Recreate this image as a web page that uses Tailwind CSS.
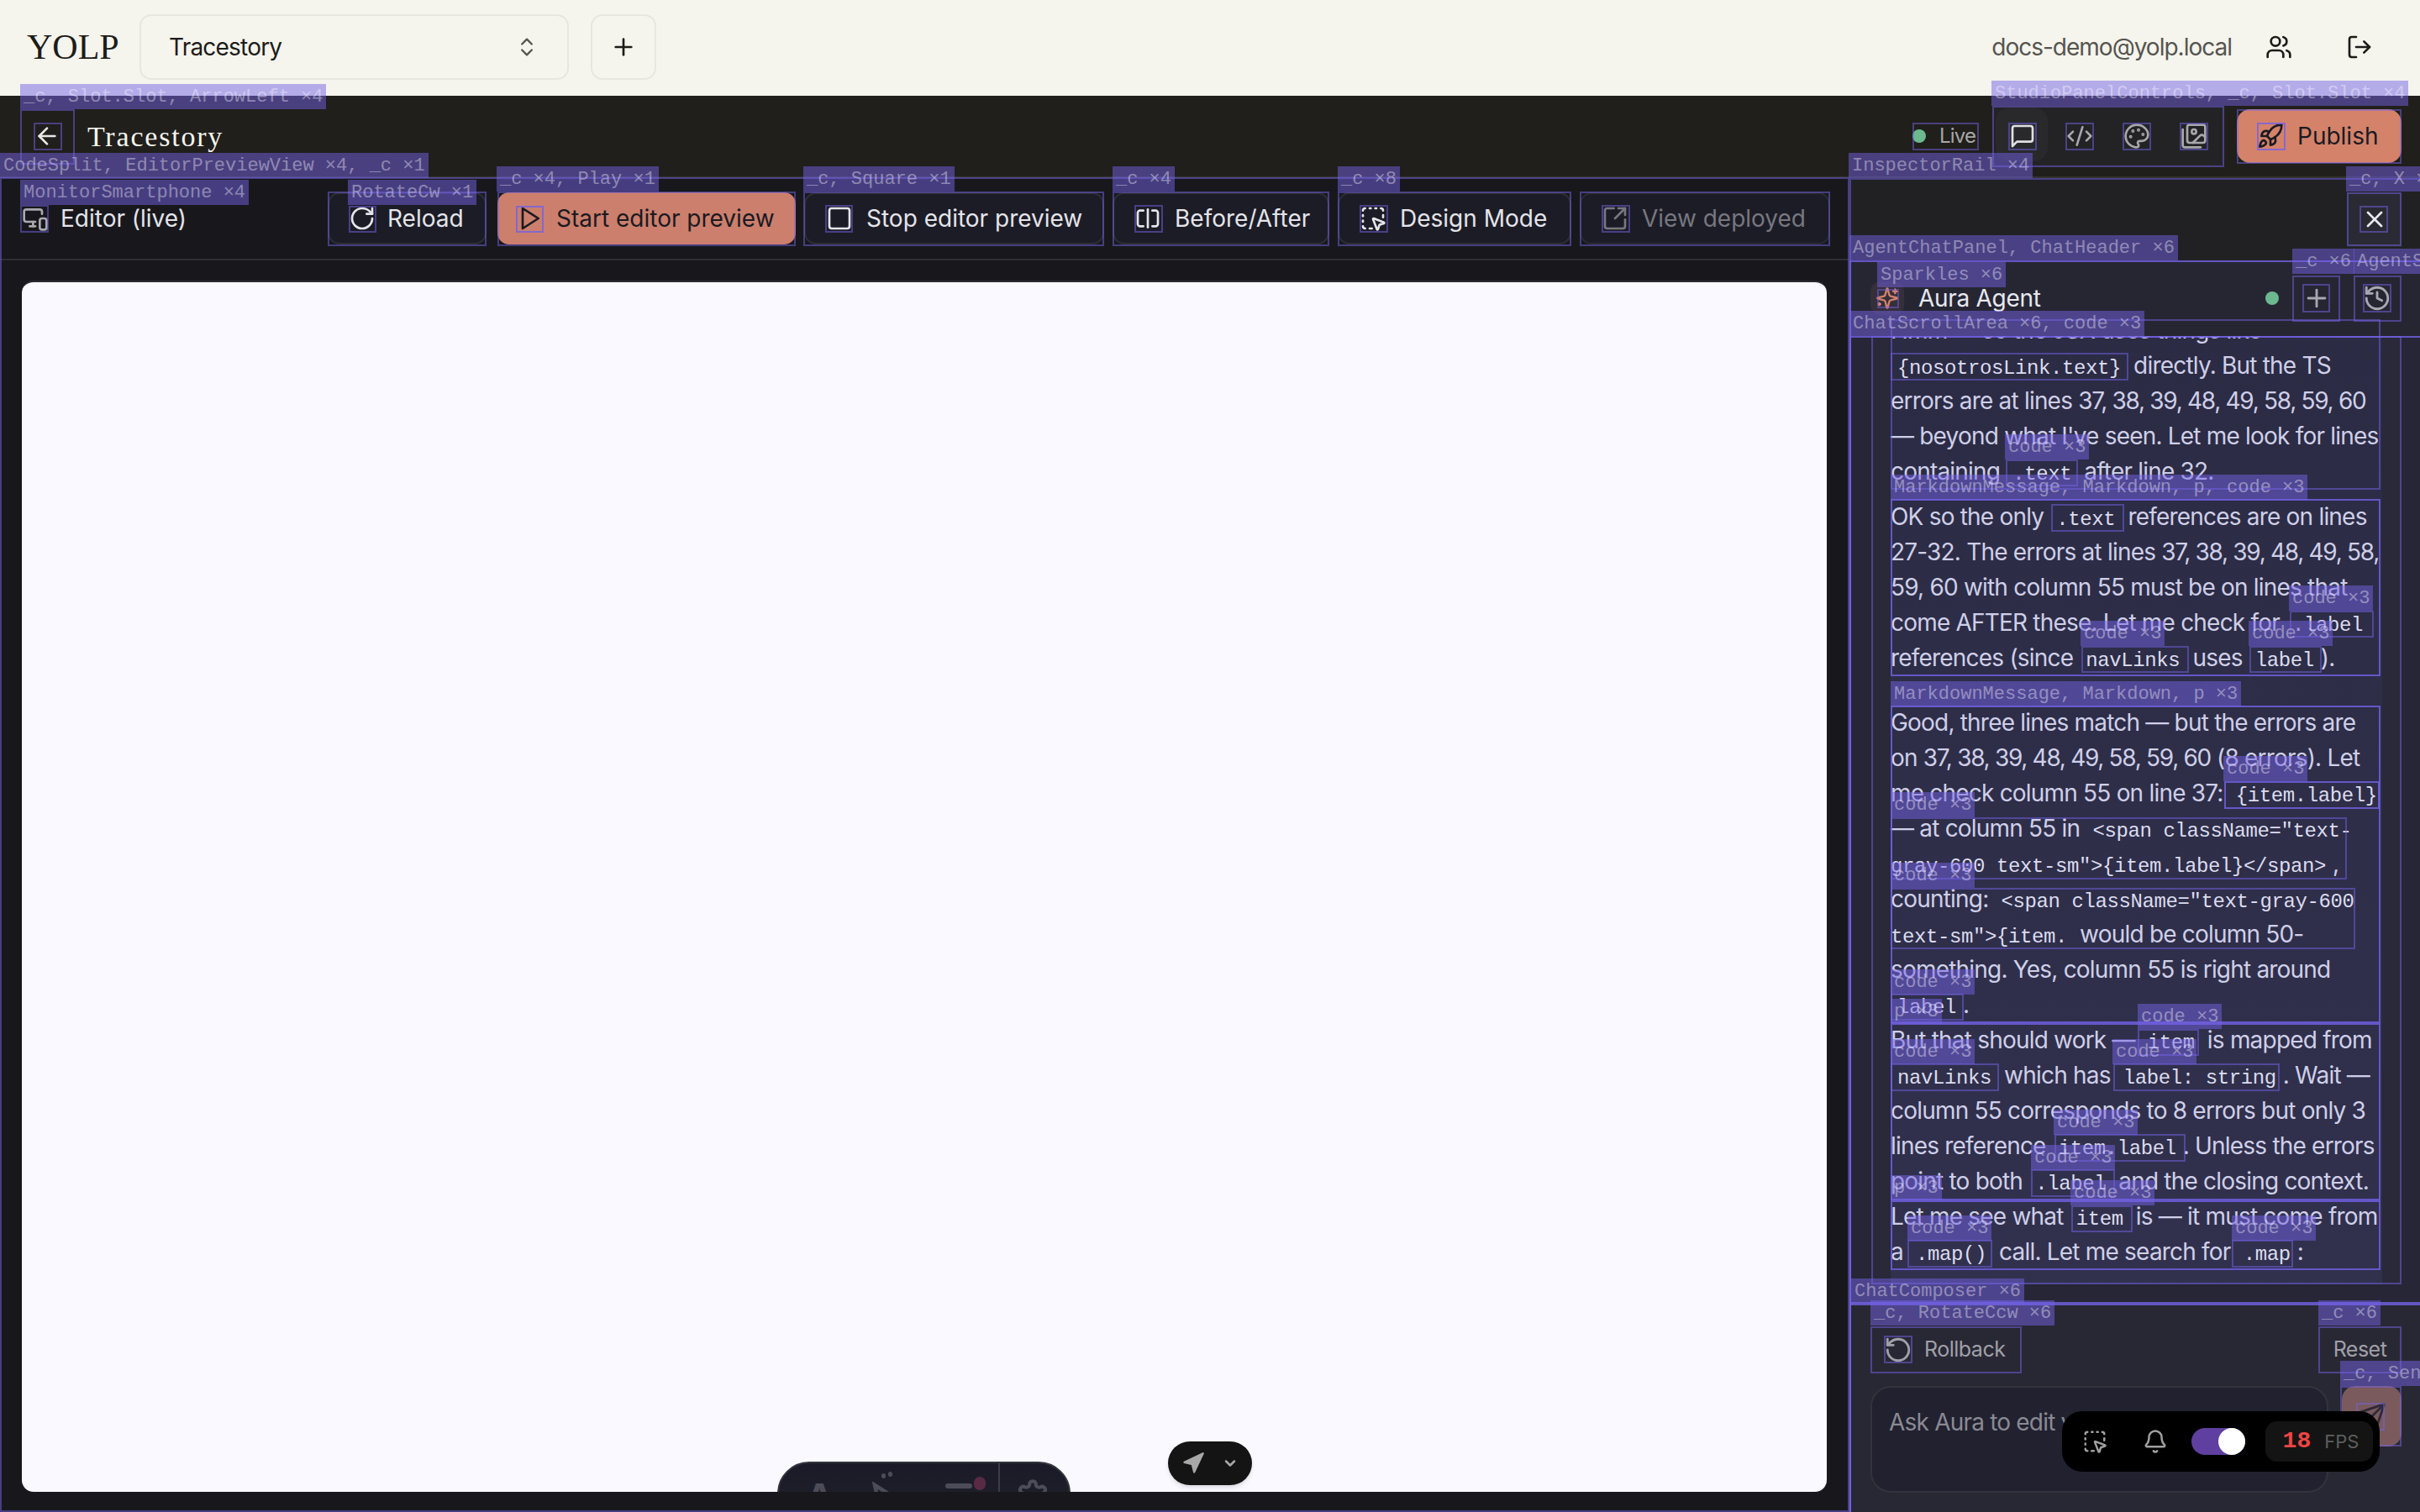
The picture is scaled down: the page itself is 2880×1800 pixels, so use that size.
<!DOCTYPE html>
<html lang="en">
<head>
<meta charset="UTF-8" />
<title>YOLP - Tracestory</title>
<script src="https://cdn.jsdelivr.net/npm/@tailwindcss/browser@4"></script>
</head>
<body>
<div id="root" class="relative w-[2880px] h-[1800px] overflow-hidden flex flex-col bg-[#18181c] font-['Inter',sans-serif] text-[28px] tracking-[-0.8px]">

  <!-- app bar -->
  <header class="h-[114px] shrink-0 flex items-center pl-[32px] pr-[56px] pb-[2px] bg-[#f5f4ed] text-[#1d1c18]">
    <span class="font-['Liberation_Serif',serif] text-[42px] tracking-[0px] w-[134px]">YOLP</span>
    <button class="w-[511px] h-[78px] flex items-center justify-between pl-[33px] pr-[34px] border-2 border-[#e8e7df] rounded-[14px]">
      <span>Tracestory</span>
      <svg class="w-[28px] h-[28px] text-[#55554f]" viewBox="0 0 24 24" fill="none" stroke="currentColor" stroke-width="2" stroke-linecap="round" stroke-linejoin="round"><path d="m7 15 5 5 5-5"/><path d="m7 9 5-5 5 5"/></svg>
    </button>
    <button class="ml-[26px] w-[78px] h-[78px] flex items-center justify-center border-2 border-[#e8e7df] rounded-[14px]">
      <svg class="w-[32px] h-[32px]" viewBox="0 0 24 24" fill="none" stroke="currentColor" stroke-width="2" stroke-linecap="round" stroke-linejoin="round"><path d="M5 12h14"/><path d="M12 5v14"/></svg>
    </button>
    <span class="ml-auto text-[#55554f] tracking-[-1px]">docs-demo@yolp.local</span>
    <svg class="ml-[40px] w-[32px] h-[32px]" viewBox="0 0 24 24" fill="none" stroke="currentColor" stroke-width="2" stroke-linecap="round" stroke-linejoin="round"><path d="M16 21v-2a4 4 0 0 0-4-4H6a4 4 0 0 0-4 4v2"/><circle cx="9" cy="7" r="4"/><path d="M22 21v-2a4 4 0 0 0-3-3.87"/><path d="M16 3.13a4 4 0 0 1 0 7.75"/></svg>
    <svg class="ml-[64px] w-[32px] h-[32px]" viewBox="0 0 24 24" fill="none" stroke="currentColor" stroke-width="2" stroke-linecap="round" stroke-linejoin="round"><path d="M9 21H5a2 2 0 0 1-2-2V5a2 2 0 0 1 2-2h4"/><polyline points="16 17 21 12 16 7"/><line x1="21" y1="12" x2="9" y2="12"/></svg>
  </header>

  <!-- studio header -->
  <div class="h-[98px] shrink-0 flex items-center pl-[24px] pr-[22px] bg-[#201f1b] border-b-2 border-[#33322e]">
    <button class="w-[64px] h-[64px] flex items-center justify-center text-[#e8e8e8]">
      <svg class="w-[32px] h-[32px]" viewBox="0 0 24 24" fill="none" stroke="currentColor" stroke-width="2" stroke-linecap="round" stroke-linejoin="round"><path d="m12 19-7-7 7-7"/><path d="M19 12H5"/></svg>
    </button>
    <span class="ml-[16px] font-['Liberation_Serif',serif] text-[34px] tracking-[1.8px] text-[#f5f4ed]">Tracestory</span>
    <div class="ml-auto flex items-center gap-[16px] text-[24px] text-[#a8a8a8]">
      <span class="w-[16px] h-[16px] rounded-full bg-[#6cb88f]"></span>
      <span class="w-[47px]">Live</span>
    </div>
    <div class="ml-[16px] w-[276px] h-[73px] flex items-center gap-[34px] pl-[19px] bg-[#232326] text-[#a8a8a8] relative">
      <span class="absolute left-[4px] top-[2px] w-[62px] h-[64px] rounded-[16px] bg-[#29292c]"></span>
      <svg class="relative w-[34px] h-[32px] text-[#e0e0e0]" viewBox="0 0 24 24" fill="none" stroke="currentColor" stroke-width="2" stroke-linecap="round" stroke-linejoin="round"><path d="M21 15a2 2 0 0 1-2 2H7l-4 4V5a2 2 0 0 1 2-2h14a2 2 0 0 1 2 2z"/></svg>
      <svg class="w-[34px] h-[32px]" viewBox="0 0 24 24" fill="none" stroke="currentColor" stroke-width="2" stroke-linecap="round" stroke-linejoin="round"><path d="m18 16 4-4-4-4"/><path d="m6 8-4 4 4 4"/><path d="m14.5 4-5 16"/></svg>
      <svg class="w-[34px] h-[32px]" viewBox="0 0 24 24" fill="none" stroke="currentColor" stroke-width="2" stroke-linecap="round" stroke-linejoin="round"><circle cx="13.5" cy="6.5" r=".5" fill="currentColor"/><circle cx="17.5" cy="10.5" r=".5" fill="currentColor"/><circle cx="8.5" cy="7.5" r=".5" fill="currentColor"/><circle cx="6.5" cy="12.5" r=".5" fill="currentColor"/><path d="M12 2C6.5 2 2 6.5 2 12s4.5 10 10 10c.926 0 1.648-.746 1.648-1.688 0-.437-.18-.835-.437-1.125-.29-.289-.438-.652-.438-1.125a1.64 1.64 0 0 1 1.668-1.668h1.996c3.051 0 5.555-2.503 5.555-5.554C21.965 6.012 17.461 2 12 2z"/></svg>
      <svg class="w-[34px] h-[32px]" viewBox="0 0 24 24" fill="none" stroke="currentColor" stroke-width="2" stroke-linecap="round" stroke-linejoin="round"><path d="M18 22H4a2 2 0 0 1-2-2V6"/><path d="m22 13-1.296-1.296a2.41 2.41 0 0 0-3.408 0L11 18"/><circle cx="12" cy="8" r="2"/><rect width="16" height="16" x="6" y="2" rx="2"/></svg>
    </div>
    <button class="ml-[15px] w-[196px] h-[64px] flex items-center gap-[16px] pl-[24px] rounded-[16px] bg-[#d4826a] text-[#1a1a22] tracking-normal">
      <svg class="w-[32px] h-[32px]" viewBox="0 0 24 24" fill="none" stroke="currentColor" stroke-width="2" stroke-linecap="round" stroke-linejoin="round"><path d="M4.5 16.5c-1.5 1.26-2 5-2 5s3.74-.5 5-2c.71-.84.7-2.13-.09-2.91a2.18 2.18 0 0 0-2.91-.09z"/><path d="m12 15-3-3a22 22 0 0 1 2-3.95A12.88 12.88 0 0 1 22 2c0 2.72-.78 7.5-6 11a22.35 22.35 0 0 1-4 2z"/><path d="M9 12H4s.55-3.03 2-4c1.62-1.08 5 0 5 0"/><path d="M12 15v5s3.03-.55 4-2c1.08-1.62 0-5 0-5"/></svg>
      Publish
    </button>
  </div>

  <div class="flex-1 min-h-0 flex">
    <!-- editor preview -->
    <main class="w-[2200px] shrink-0 flex flex-col bg-[#18181c]">
      <div class="h-[98px] shrink-0 flex items-center pl-[26px] pr-[22px] border-b-2 border-[#2e2e32] text-[#e4e4ea] tracking-normal">
        <svg class="w-[32px] h-[32px] text-[#a8a8ae]" viewBox="0 0 24 24" fill="none" stroke="currentColor" stroke-width="2" stroke-linecap="round" stroke-linejoin="round"><path d="M18 8V6a2 2 0 0 0-2-2H4a2 2 0 0 0-2 2v7a2 2 0 0 0 2 2h8"/><path d="M10 19v-3.96 3.15"/><path d="M7 19h5"/><rect width="6" height="10" x="16" y="12" rx="2"/></svg>
        <span class="ml-[14px]">Editor (live)</span>
        <div class="ml-auto flex items-center gap-[10px]">
          <button class="w-[189px] h-[62px] flex items-center gap-[14px] pl-[23px] rounded-[14px] border-2 border-[#2e2e36] bg-[#1c1c26]">
            <svg class="w-[32px] h-[32px]" viewBox="0 0 24 24" fill="none" stroke="currentColor" stroke-width="2" stroke-linecap="round" stroke-linejoin="round"><path d="M21 12a9 9 0 1 1-9-9c2.52 0 4.93 1 6.74 2.74L21 8"/><path d="M21 3v5h-5"/></svg>
            Reload
          </button>
          <button class="ml-[3px] w-[355px] h-[62px] flex items-center gap-[16px] pl-[22px] rounded-[14px] bg-[#cc7f6c] text-[#1a1a22]">
            <svg class="w-[32px] h-[32px]" viewBox="0 0 24 24" fill="none" stroke="currentColor" stroke-width="2" stroke-linecap="round" stroke-linejoin="round"><polygon points="6 3 20 12 6 21 6 3"/></svg>
            Start editor preview
          </button>
          <button class="w-[357px] h-[62px] flex items-center gap-[16px] pl-[24px] rounded-[14px] border-2 border-[#2e2e36] bg-[#1c1c26]">
            <svg class="w-[32px] h-[32px]" viewBox="0 0 24 24" fill="none" stroke="currentColor" stroke-width="2" stroke-linecap="round" stroke-linejoin="round"><rect width="18" height="18" x="3" y="3" rx="2"/></svg>
            Stop editor preview
          </button>
          <button class="w-[258px] h-[62px] flex items-center gap-[16px] pl-[24px] rounded-[14px] border-2 border-[#2e2e36] bg-[#1c1c26]">
            <svg class="w-[32px] h-[32px]" viewBox="0 0 24 24" fill="none" stroke="currentColor" stroke-width="2" stroke-linecap="round" stroke-linejoin="round"><path d="M8 19H5c-1 0-2-1-2-2V7c0-1 1-2 2-2h3"/><path d="M16 5h3c1 0 2 1 2 2v10c0 1-1 2-2 2h-3"/><path d="M12 4v16"/></svg>
            Before/After
          </button>
          <button class="w-[278px] h-[62px] flex items-center gap-[16px] pl-[24px] rounded-[14px] border-2 border-[#2e2e36] bg-[#1c1c26]">
            <svg class="w-[32px] h-[32px]" viewBox="0 0 24 24" fill="none" stroke="currentColor" stroke-width="2" stroke-linecap="round" stroke-linejoin="round"><path d="M12.034 12.681a.498.498 0 0 1 .647-.647l9 3.5a.5.5 0 0 1-.033.943l-3.444 1.068a1 1 0 0 0-.66.66l-1.067 3.443a.5.5 0 0 1-.943.033z"/><path d="M5 3a2 2 0 0 0-2 2"/><path d="M19 3a2 2 0 0 1 2 2"/><path d="M5 21a2 2 0 0 1-2-2"/><path d="M9 3h1"/><path d="M9 21h2"/><path d="M14 3h1"/><path d="M3 9v1"/><path d="M21 9v2"/><path d="M3 14v1"/></svg>
            Design Mode
          </button>
          <button class="w-[298px] h-[62px] flex items-center gap-[16px] pl-[24px] rounded-[14px] border-2 border-[#2a2a32] bg-[#1c1c26] text-[#77777f]">
            <svg class="w-[32px] h-[32px]" viewBox="0 0 24 24" fill="none" stroke="currentColor" stroke-width="2" stroke-linecap="round" stroke-linejoin="round"><path d="M21 13v6a2 2 0 0 1-2 2H5a2 2 0 0 1-2-2V5a2 2 0 0 1 2-2h6"/><path d="m21 3-9 9"/><path d="M15 3h6v6"/></svg>
            View deployed
          </button>
        </div>
      </div>
      <div class="flex-1 min-h-0 pt-[24px] pb-[24px] pl-[26px] pr-[26px]">
        <div class="relative h-full rounded-[14px] bg-[#f9f9ff] border-t-2 border-[#2a2a30] overflow-hidden">
          <!-- clipped tool dock -->
          <div class="absolute left-[899px] top-[1404px] w-[349px] h-[110px] rounded-[38px] bg-gradient-to-b from-[#1a1a28] to-[#262630] border-2 border-[#34343e] text-[#4c4c58]">
            <span class="absolute left-[32px] top-[18px] font-bold text-[44px] leading-none">A</span>
            <svg class="absolute left-[108px] top-[20px] w-[36px] h-[36px]" viewBox="0 0 24 24" fill="none" stroke="currentColor" stroke-width="3"><path d="M4 4 20 14 8 22z"/></svg>
            <span class="absolute left-[122px] top-[12px] w-[5px] h-[6px] rounded-full bg-[#4c4c58]"></span>
            <span class="absolute left-[130px] top-[10px] w-[5px] h-[6px] rounded-full bg-[#4c4c58]"></span>
            <span class="absolute left-[198px] top-[24px] w-[32px] h-[6px] rounded-full bg-[#4c4c58]"></span>
            <span class="absolute left-[232px] top-[16px] w-[14px] h-[16px] rounded-full bg-[#5a2a45]"></span>
            <span class="absolute left-[261px] top-0 w-[2px] h-[40px] bg-[#3c3c46]"></span>
            <svg class="absolute left-[282px] top-[18px] w-[40px] h-[40px]" viewBox="0 0 24 24" fill="none" stroke="currentColor" stroke-width="2.5"><path d="M12.22 2h-.44a2 2 0 0 0-2 2v.18a2 2 0 0 1-1 1.73l-.43.25a2 2 0 0 1-2 0l-.15-.08a2 2 0 0 0-2.73.73l-.22.38a2 2 0 0 0 .73 2.73l.15.1a2 2 0 0 1 1 1.72v.51a2 2 0 0 1-1 1.74l-.15.09a2 2 0 0 0-.73 2.73l.22.38a2 2 0 0 0 2.73.73l.15-.08a2 2 0 0 1 2 0l.43.25a2 2 0 0 1 1 1.73V20a2 2 0 0 0 2 2h.44a2 2 0 0 0 2-2v-.18a2 2 0 0 1 1-1.73l.43-.25a2 2 0 0 1 2 0l.15.08a2 2 0 0 0 2.73-.73l.22-.39a2 2 0 0 0-.73-2.73l-.15-.08a2 2 0 0 1-1-1.74v-.5a2 2 0 0 1 1-1.74l.15-.09a2 2 0 0 0 .73-2.73l-.22-.38a2 2 0 0 0-2.73-.73l-.15.08a2 2 0 0 1-2 0l-.43-.25a2 2 0 0 1-1-1.73V4a2 2 0 0 0-2-2z"/></svg>
          </div>
          <!-- page locator -->
          <div class="absolute left-[1364px] top-[1380px] w-[100px] h-[52px] rounded-[26px] bg-[#141414] shadow-md flex items-center justify-center gap-[20px] text-[#a8a8a8]">
            <svg class="w-[28px] h-[28px]" viewBox="0 0 24 24" fill="currentColor" stroke="currentColor" stroke-width="2" stroke-linejoin="round"><polygon points="3 11 22 2 13 21 11 13 3 11"/></svg>
            <svg class="w-[20px] h-[20px]" viewBox="0 0 24 24" fill="none" stroke="currentColor" stroke-width="3" stroke-linecap="round" stroke-linejoin="round"><path d="m6 9 6 6 6-6"/></svg>
          </div>
        </div>
      </div>
    </main>

    <!-- inspector rail -->
    <aside class="flex-1 min-w-0 flex flex-col bg-[#212124]">
      <div class="h-[98px] shrink-0 flex justify-end items-center pr-[22px]">
        <button class="w-[65px] h-[65px] flex items-center justify-center bg-[#2a2a34] text-[#e8e8f0]">
          <svg class="w-[32px] h-[32px]" viewBox="0 0 24 24" fill="none" stroke="currentColor" stroke-width="2" stroke-linecap="round" stroke-linejoin="round"><path d="M18 6 6 18"/><path d="m6 6 12 12"/></svg>
        </button>
      </div>
      <div class="h-[90px] shrink-0 flex items-center pl-[26px] pr-[22px] bg-[#262633] text-[#e8e8f0]">
        <span class="w-[40px] h-[40px] rounded-[12px] bg-[#352f3a] flex items-center justify-center text-[#d4826a]">
          <svg class="w-[28px] h-[28px]" viewBox="0 0 24 24" fill="none" stroke="currentColor" stroke-width="2" stroke-linecap="round" stroke-linejoin="round"><path d="M9.937 15.5A2 2 0 0 0 8.5 14.063l-6.135-1.582a.5.5 0 0 1 0-.962L8.5 9.936A2 2 0 0 0 9.937 8.5l1.582-6.135a.5.5 0 0 1 .963 0L14.063 8.5A2 2 0 0 0 15.5 9.937l6.135 1.581a.5.5 0 0 1 0 .964L15.5 14.063a2 2 0 0 0-1.437 1.437l-1.582 6.135a.5.5 0 0 1-.963 0z"/><path d="M20 3v4"/><path d="M22 5h-4"/><path d="M4 17v2"/><path d="M5 18H3"/></svg>
        </span>
        <span class="ml-[17px] tracking-[-0.3px]">Aura Agent</span>
        <span class="ml-auto w-[16px] h-[16px] rounded-full bg-[#6cb88f]"></span>
        <button class="ml-[16px] w-[57px] h-[56px] flex items-center justify-center text-[#a8a8b0]">
          <svg class="w-[34px] h-[34px]" viewBox="0 0 24 24" fill="none" stroke="currentColor" stroke-width="2" stroke-linecap="round" stroke-linejoin="round"><path d="M5 12h14"/><path d="M12 5v14"/></svg>
        </button>
        <button class="ml-[15px] w-[58px] h-[56px] flex items-center justify-center text-[#a8a8b0]">
          <svg class="w-[34px] h-[34px]" viewBox="0 0 24 24" fill="none" stroke="currentColor" stroke-width="2" stroke-linecap="round" stroke-linejoin="round"><path d="M3 12a9 9 0 1 0 9-9 9.75 9.75 0 0 0-6.74 2.74L3 8"/><path d="M3 3v5h5"/><path d="M12 7v5l4 2"/></svg>
        </button>
      </div>

      <!-- chat scroll area -->
      <div class="h-[1152px] shrink-0 overflow-hidden bg-[#262636] pl-[27px] pr-[22px]">
        <div class="h-[1129px] bg-[#292939] px-[23px] overflow-hidden">
          <div class="-mt-[28px] flex flex-col bg-gradient-to-b from-[#2b2b44] to-[#31314e] leading-[42px] whitespace-nowrap text-[#cfcfe8] [&_code]:font-['Liberation_Mono',monospace] [&_code]:text-[24px] [&_code]:leading-none [&_code]:tracking-[-0.4px] [&_code]:text-[#dcdcee] [&_code]:px-[8px]">
            <p>Hmm &mdash; so the JSX uses things like<br /><code>{nosotrosLink.text}</code> directly. But the TS<br />errors are at lines <span class="tracking-[-1.3px]">37, 38, 39, 48, 49, 58, 59, 60</span><br />&mdash; beyond what I've seen. Let me look for lines<br />containing <code>.text</code> after line 32.</p>
            <p class="mt-[12px]">OK so the only <code>.text</code> references are on lines<br />27-32. The errors at lines <span class="tracking-[-1.3px]">37, 38, 39, 48, 49, 58,</span><br />59, 60 with column 55 must be on lines that<br />come AFTER these. Let me check for <code>.label</code><br />references (since <code>navLinks</code> uses <code>label</code>).</p>
            <p class="mt-[35px]">Good, three lines match &mdash; but the errors are<br />on <span class="tracking-[-1.3px]">37, 38, 39, 48, 49, 58, 59, 60</span> (8 errors). Let<br />me check column 55 on line 37: <code>{item.label}</code><br />&mdash; at column 55 in <code>&lt;span className="text-</code><br /><code class="!pl-0">gray-600 text-sm"&gt;{item.label}&lt;/span&gt;</code>,<br />counting: <code>&lt;span className="text-gray-600</code><br /><code class="!pl-0">text-sm"&gt;{item.</code> would be column 50-<br />something. Yes, column 55 is right around<br /><code>label</code>.</p>
            <p>But that should work &mdash; <code>item</code> is mapped from<br /><code>navLinks</code> which has <code>label: string</code>. Wait &mdash;<br />column 55 corresponds to 8 errors but only 3<br />lines reference <code>item.label</code>. Unless the errors<br />point to both <code>.label</code> and the closing context.</p>
            <p class="pb-[40px]">Let me see what <code>item</code> is &mdash; it must come from<br />a <code>.map()</code> call. Let me search for <code>.map</code>:</p>
          </div>
        </div>
      </div>

      <!-- composer -->
      <div class="flex-1 min-h-0 bg-[#282834] px-[26px] pt-[27px] pr-[22px] text-[#a0a0a8]">
        <div class="h-[56px] flex items-center justify-between text-[25px] tracking-[-0.5px]">
          <button class="w-[180px] h-[56px] flex items-center gap-[14px] pl-[16px]">
            <svg class="w-[34px] h-[34px]" viewBox="0 0 24 24" fill="none" stroke="currentColor" stroke-width="2" stroke-linecap="round" stroke-linejoin="round"><path d="M3 12a9 9 0 1 0 9-9 9.75 9.75 0 0 0-6.74 2.74L3 8"/><path d="M3 3v5h5"/></svg>
            Rollback
          </button>
          <button class="w-[99px] h-[56px] text-center">Reset</button>
        </div>
        <div class="mt-[15px] flex justify-between">
          <div class="w-[545px] h-[127px] rounded-[24px] border-2 border-[#33333f] bg-[#212130] pl-[20px] pt-[20px] text-[#8a8a92] whitespace-nowrap overflow-hidden">Ask Aura to edit your app</div>
          <button class="w-[71px] h-[72px] rounded-[16px] bg-[#7a5a5c] flex items-center justify-center text-[#2e2a3a]">
            <svg class="w-[34px] h-[34px]" viewBox="0 0 24 24" fill="none" stroke="currentColor" stroke-width="2" stroke-linecap="round" stroke-linejoin="round"><path d="M14.536 21.686a.5.5 0 0 0 .937-.024l6.5-19a.496.496 0 0 0-.635-.635l-19 6.5a.5.5 0 0 0-.024.937l7.93 3.18a2 2 0 0 1 1.112 1.11z"/><path d="m21.854 2.147-10.94 10.939"/></svg>
          </button>
        </div>
      </div>
    </aside>
  </div>

  <!-- render scan outlines get appended here -->
  <div id="scanLayer" class="absolute inset-0 pointer-events-none"></div>

  <!-- scan toolbar -->
  <div class="absolute left-[2454px] top-[1680px] w-[378px] h-[72px] rounded-[24px] bg-black flex items-center text-[#a0a0a0]">
    <svg class="ml-[24px] w-[30px] h-[30px]" viewBox="0 0 24 24" fill="none" stroke="currentColor" stroke-width="2" stroke-linecap="round" stroke-linejoin="round"><path d="M12.034 12.681a.498.498 0 0 1 .647-.647l9 3.5a.5.5 0 0 1-.033.943l-3.444 1.068a1 1 0 0 0-.66.66l-1.067 3.443a.5.5 0 0 1-.943.033z"/><path d="M5 3a2 2 0 0 0-2 2"/><path d="M19 3a2 2 0 0 1 2 2"/><path d="M5 21a2 2 0 0 1-2-2"/><path d="M9 3h1"/><path d="M9 21h2"/><path d="M14 3h1"/><path d="M3 9v1"/><path d="M21 9v2"/><path d="M3 14v1"/></svg>
    <svg class="ml-[42px] w-[30px] h-[30px]" viewBox="0 0 24 24" fill="none" stroke="currentColor" stroke-width="2" stroke-linecap="round" stroke-linejoin="round"><path d="M10.268 21a2 2 0 0 0 3.464 0"/><path d="M3.262 15.326A1 1 0 0 0 4 17h16a1 1 0 0 0 .74-1.673C19.41 13.956 18 12.499 18 8A6 6 0 0 0 6 8c0 4.499-1.411 5.956-2.738 7.326"/></svg>
    <span class="ml-[28px] w-[64px] h-[32px] rounded-full bg-[#5f3f9f] flex justify-end">
      <span class="w-[32px] h-[32px] rounded-full bg-white"></span>
    </span>
    <span class="ml-[24px] w-[128px] h-[48px] rounded-[14px] bg-[#141414] flex items-center justify-center gap-[16px] pl-[4px] font-['Liberation_Mono',monospace] tracking-normal">
      <span class="text-[28px] font-bold text-[#ef4444]">18</span>
      <span class="text-[22px] text-[#5e5e5e] font-['Inter',sans-serif]">FPS</span>
    </span>
  </div>
</div>

<script>
  // outlines: x, y, w, h, bright
  const boxes = [
    [0, 211, 2201, 1589, 0], [24, 130, 65, 66, 0], [40, 146, 34, 33, 0],
    [24, 244, 34, 33, 0], [390, 228, 189, 65, 0], [415, 245, 33, 32, 0],
    [592, 228, 355, 65, 0], [614, 245, 33, 32, 1], [956, 228, 358, 65, 0], [982, 244, 33, 33, 0],
    [1324, 228, 258, 65, 0], [1350, 244, 34, 33, 0], [1592, 228, 278, 65, 0], [1618, 244, 34, 33, 0],
    [1880, 228, 298, 65, 0], [1906, 244, 34, 33, 0],
    [2371, 126, 276, 73, 0], [2390, 146, 34, 33, 0], [2458, 146, 34, 33, 0], [2526, 146, 34, 33, 0], [2594, 146, 34, 33, 0],
    [2276, 146, 79, 33, 0], [2662, 130, 196, 65, 0], [2686, 146, 34, 33, 1],
    [2201, 212, 700, 1600, 0], [2793, 229, 65, 64, 0], [2808, 245, 34, 32, 0],
    [2201, 310, 700, 1500, 1], [2234, 344, 26, 23, 0],
    [2728, 328, 57, 55, 0], [2740, 338, 33, 34, 0], [2801, 328, 57, 55, 0], [2812, 338, 34, 34, 0],
    [2201, 400, 700, 1152, 1], [2227, 400, 631, 1129, 0],
    [2250, 380, 583, 203, 0], [2250, 420, 283, 33, 0], [2387, 547, 86, 32, 0],
    [2250, 594, 583, 211, 1], [2441, 600, 87, 33, 0], [2725, 727, 100, 32, 0], [2477, 769, 128, 32, 0], [2677, 769, 86, 32, 0],
    [2250, 840, 583, 378, 1], [2647, 930, 185, 33, 1], [2250, 973, 543, 74, 0], [2250, 1057, 553, 73, 0], [2250, 1183, 87, 32, 0],
    [2250, 1218, 583, 211, 1], [2544, 1225, 73, 32, 0], [2250, 1266, 129, 33, 0], [2515, 1266, 198, 33, 0], [2445, 1350, 156, 33, 0], [2417, 1392, 100, 33, 0],
    [2250, 1429, 583, 83, 1], [2465, 1435, 73, 32, 0], [2270, 1476, 101, 33, 0], [2656, 1476, 73, 33, 0],
    [2201, 1552, 700, 300, 1], [2226, 1579, 180, 56, 0], [2242, 1590, 34, 33, 0], [2759, 1579, 99, 56, 0], [2785, 1650, 73, 72, 0], [2804, 1670, 34, 33, 0]
  ];
  // labels: x, y, text
  const labels = [
    [24, 100, "_c, Slot.Slot, ArrowLeft ×4"], [0, 182, "CodeSplit, EditorPreviewView ×4, _c ×1"],
    [24, 214, "MonitorSmartphone ×4"], [414, 214, "RotateCw ×1"], [591, 198, "_c ×4, Play ×1"],
    [956, 198, "_c, Square ×1"], [1324, 198, "_c ×4"], [1592, 198, "_c ×8"],
    [2370, 96, "StudioPanelControls, _c, Slot.Slot ×4"], [2200, 182, "InspectorRail ×4"], [2792, 198, "_c, X ×4"],
    [2201, 280, "AgentChatPanel, ChatHeader ×6"], [2234, 312, "Sparkles ×6"], [2728, 296, "_c ×6"], [2801, 296, "AgentSessions ×1"],
    [2201, 370, "ChatScrollArea ×6, code ×3"], [2386, 517, "code ×3"],
    [2250, 565, "MarkdownMessage, Markdown, p, code ×3"], [2724, 697, "code ×3"], [2476, 739, "code ×3"], [2676, 739, "code ×3"],
    [2250, 811, "MarkdownMessage, Markdown, p ×3"], [2646, 900, "code ×3"], [2250, 943, "code ×3"], [2250, 1027, "code ×3"], [2250, 1154, "code ×3"],
    [2250, 1189, "p ×3"], [2544, 1195, "code ×3"], [2250, 1237, "code ×3"], [2514, 1237, "code ×3"], [2444, 1321, "code ×3"], [2417, 1363, "code ×3"],
    [2250, 1399, "p ×3"], [2464, 1405, "code ×3"], [2270, 1447, "code ×3"], [2656, 1447, "code ×3"],
    [2203, 1522, "ChatComposer ×6"], [2226, 1548, "_c, RotateCcw ×6"], [2759, 1548, "_c ×6"], [2785, 1620, "_c, Send ×6"]
  ];

  const scanLayer = document.getElementById("scanLayer");

  for (const [x, y, w, h, bright] of boxes) {
    const box = document.createElement("div");
    box.className = bright
      ? "absolute border-2 border-[#7361e6]/80"
      : "absolute border-2 border-[#7361e6]/50";
    box.style.cssText = `left:${x}px;top:${y}px;width:${w}px;height:${h}px`;
    scanLayer.appendChild(box);
  }

  for (const [x, y, text] of labels) {
    const label = document.createElement("div");
    label.className = "absolute h-[30px] px-[4px] leading-[32px] bg-[#7361e6]/50 text-white/40 whitespace-nowrap tracking-normal text-[22px] font-['Liberation_Mono',monospace]";
    label.style.cssText = `left:${x}px;top:${y}px`;
    label.textContent = text;
    scanLayer.appendChild(label);
  }
</script>
</body>
</html>
